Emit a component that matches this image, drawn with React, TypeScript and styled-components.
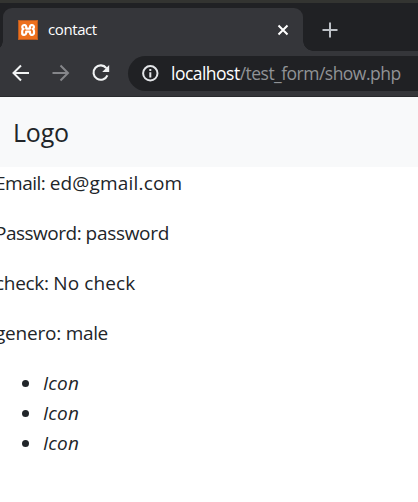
import React from "react";
import styled, { createGlobalStyle } from "styled-components";

const GlobalStyle = createGlobalStyle`
  * { box-sizing: border-box; }
  body {
    margin: 0;
    background: #fff;
    color: #212529;
    font-family: "Open Sans", "Noto Sans", sans-serif;
    overflow: hidden;
  }
`;

const Window = styled.div`
  width: 418px;
  height: 502px;
  overflow: hidden;
`;

const TabStrip = styled.div`
  display: flex;
  height: 51px;
  padding: 5px 0 0 3px;
  border-top: 3px solid #333431;
  background: #202124;
`;

const Tab = styled.div`
  position: relative;
  display: flex;
  align-items: center;
  width: 300px;
  height: 43px;
  padding: 0 14px 0 15px;
  border-radius: 9px 9px 0 0;
  background: #35363a;
  &::before,
  &::after {
    content: "";
    position: absolute;
    bottom: 0;
    width: 10px;
    height: 10px;
  }
  &::before {
    left: -10px;
    background: radial-gradient(circle at 0 0, #202124 9.5px, #35363a 10px);
  }
  &::after {
    right: -10px;
    background: radial-gradient(circle at 100% 0, #202124 9.5px, #35363a 10px);
  }
`;

const TabTitle = styled.span`
  flex: 1;
  margin-left: 10px;
  padding-bottom: 1px;
  color: #fff;
  font-size: 15px;
  line-height: 20px;
  letter-spacing: -0.4px;
`;

const NewTab = styled.div`
  display: flex;
  align-items: center;
  height: 43px;
  margin-left: 19px;
`;

const Toolbar = styled.div`
  display: flex;
  align-items: center;
  height: 46px;
  padding: 0 0 1px 12px;
  border-bottom: 1px solid #292a2d;
  background: #35363a;
`;

const NavButtons = styled.div`
  display: flex;
  gap: 22px;
  width: 116px;
`;

const AddressBar = styled.div`
  display: flex;
  flex: 1;
  align-items: center;
  height: 35px;
  padding-left: 13px;
  border-radius: 18px 0 0 18px;
  background: #202124;
`;

const Url = styled.span`
  margin-left: 12px;
  color: #919396;
  font-size: 17.5px;
  line-height: 24px;
  letter-spacing: -0.52px;
  white-space: nowrap;
`;

const Host = styled.span`
  color: #fff;
`;

const Navbar = styled.header`
  display: flex;
  align-items: center;
  height: 70px;
  padding: 0 0 0 13px;
  background: #f8f9fa;
`;

const Brand = styled.span`
  font-size: 25px;
  line-height: 38px;
  letter-spacing: -0.2px;
`;

const Content = styled.main`
  padding-top: 1px;
  font-size: 19px;
  line-height: 30px;
`;

const Field = styled.p`
  margin: 0 0 20px -5px;
  white-space: pre;
`;

const Run = styled.span<{ $tracking: number }>`
  letter-spacing: ${(p) => p.$tracking}px;
`;

const List = styled.ul`
  margin: 0;
  padding: 0;
  list-style: none;
`;

const Item = styled.li`
  display: flex;
  align-items: center;
  height: 30px;
  padding-left: 22px;
  font-style: italic;
  letter-spacing: 0.15px;
  &::before {
    content: "";
    width: 7px;
    height: 7px;
    margin-right: 14px;
    border-radius: 50%;
    background: #212529;
  }
`;

const Favicon = () => (
  <svg width="20" height="20" viewBox="0 0 20 20">
    <rect width="20" height="20" rx="1" fill="#ed701d" />
    <rect x=".5" y=".5" width="19" height="19" rx="1" fill="none" stroke="#b95b20" />
    <path
      d="M8.2 8.6V6.5A2 2 0 1 0 5.6 8.9Q4.2 9.7 4.2 11.2v1.4A2 2 0 0 0 8.2 13.2V11.6h3.8v1.6A2 2 0 0 0 16 12.6V11.2q0-1.5-1.4-2.3A2 2 0 1 0 12 6.5V8.6Z"
      fill="none"
      stroke="#fff"
      strokeWidth="2.2"
      strokeLinejoin="round"
    />
  </svg>
);

const Arrow = ({ forward = false }: { forward?: boolean }) => (
  <svg width="18" height="18" viewBox="0 0 18 18" fill="none" stroke={forward ? "#85868a" : "#f1f3f4"} strokeWidth="2">
    <path d={forward ? "M.5 9h15M8.5 1.5 16 9 8.5 16.5" : "M17 9H2M9 1.5 1.5 9 9 16.5"} />
  </svg>
);

const Reload = () => (
  <svg width="18" height="18" viewBox="0 0 18 18">
    <path d="M14.4 4.1A7.2 7.2 0 1 0 15.4 11.3" fill="none" stroke="#f1f3f4" strokeWidth="2.1" />
    <path d="M17.2 1v7H10.2Z" fill="#f1f3f4" />
  </svg>
);

const Info = () => (
  <svg width="18" height="18" viewBox="0 0 18 18">
    <circle cx="9.3" cy="9.3" r="7.2" fill="none" stroke="#e3e5e8" strokeWidth="2" />
    <path d="M9.3 5v2M9.3 8.3v5.3" stroke="#e3e5e8" strokeWidth="2" />
  </svg>
);

const Close = () => (
  <svg width="12" height="12" viewBox="0 0 12 12" stroke="#fff" strokeWidth="2">
    <path d="m1.5 1.5 9 9m0-9-9 9" />
  </svg>
);

const Plus = () => (
  <svg width="16" height="16" viewBox="0 0 16 16" stroke="#bdc1c6" strokeWidth="2">
    <path d="M8 .5v15M.5 8h15" />
  </svg>
);

const fields = [
  { label: "Email: ", value: "ed@gmail.com", labelTracking: -0.5, tracking: 0.17 },
  { label: "Password: ", value: "password", labelTracking: -0.5, tracking: -0.3 },
  { label: "check: ", value: "No check", labelTracking: -0.3, tracking: 0.1 },
  { label: "genero: ", value: "male", labelTracking: -0.2, tracking: -0.4 },
];

export default function App() {
  return (
    <Window>
      <GlobalStyle />
      <TabStrip>
        <Tab>
          <Favicon />
          <TabTitle>contact</TabTitle>
          <Close />
        </Tab>
        <NewTab>
          <Plus />
        </NewTab>
      </TabStrip>
      <Toolbar>
        <NavButtons>
          <Arrow />
          <Arrow forward />
          <Reload />
        </NavButtons>
        <AddressBar>
          <Info />
          <Url>
            <Host>localhost</Host>/test_form/show.php
          </Url>
        </AddressBar>
      </Toolbar>
      <Navbar>
        <Brand>Logo</Brand>
      </Navbar>
      <Content>
        {fields.map((f) => (
          <Field key={f.label}>
            <Run $tracking={f.labelTracking}>{f.label}</Run>
            <Run $tracking={f.tracking}>{f.value}</Run>
          </Field>
        ))}
        <List>
          {[1, 2, 3].map((n) => (
            <Item key={n}>Icon</Item>
          ))}
        </List>
      </Content>
    </Window>
  );
}
